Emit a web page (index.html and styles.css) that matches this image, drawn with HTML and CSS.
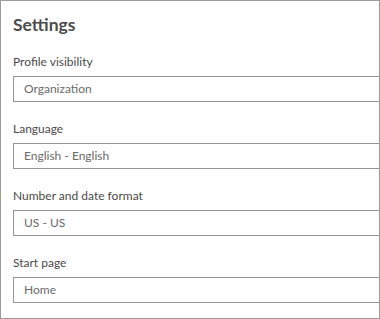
FILE: index.html
```html
<!DOCTYPE html>
<html>
<head>
<meta charset="utf-8">
<link rel="stylesheet" href="styles.css">
</head>
<body>
<div class="card">
  <h2 class="title">Settings</h2>
  <div class="field">
    <div class="label">Profile visibility</div>
    <div class="input">Organization</div>
  </div>
  <div class="field">
    <div class="label">Language</div>
    <div class="input">English - English</div>
  </div>
  <div class="field">
    <div class="label">Number and date format</div>
    <div class="input">US - US</div>
  </div>
  <div class="field">
    <div class="label">Start page</div>
    <div class="input">Home</div>
  </div>
</div>
</body>
</html>
```
FILE: styles.css
```css
html, body {
  margin: 0;
  padding: 0;
  background: #fff;
}
.card {
  width: 380px;
  height: 319px;
  box-sizing: border-box;
  border: 1px solid #9b9b9b;
  overflow: hidden;
  padding: 14px 0 0 12px;
  font-family: Lato, "Open Sans", sans-serif;
  display: flex;
  flex-direction: column;
}
.title {
  margin: 0;
  font-size: 17.5px;
  line-height: 20px;
  font-weight: 700;
  color: #4c4c4c;
}
.field {
  margin-top: 19px;
  display: flex;
  flex-direction: column;
}
.label {
  font-size: 12px;
  line-height: 16px;
  color: #4a4a4a;
  margin-bottom: 6px;
}
.input {
  width: 400px;
  height: 26px;
  box-sizing: border-box;
  border: 1px solid #959595;
  padding-left: 10px;
  font-size: 12px;
  line-height: 24px;
  color: #6a6a6a;
}
```
